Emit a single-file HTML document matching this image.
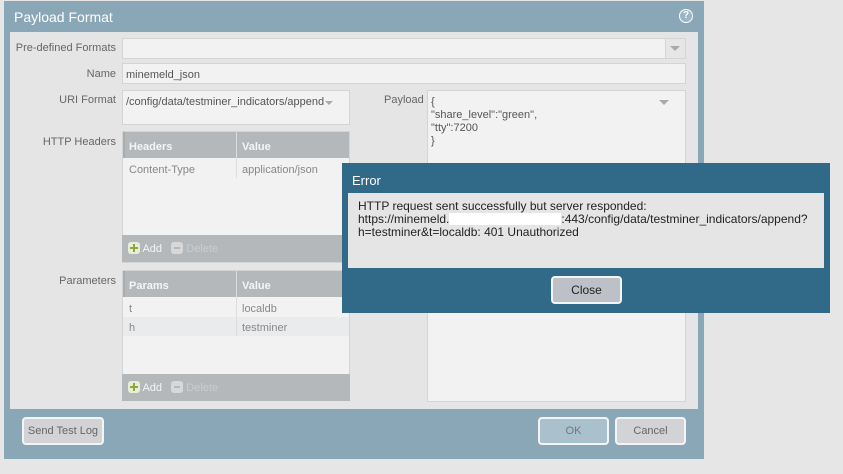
<!DOCTYPE html>
<html><head><style>
*{box-sizing:border-box;margin:0;padding:0}
body{width:843px;height:474px;background:#e6e6e6;font-family:"Liberation Sans",sans-serif;font-size:11px;color:#666;position:relative;overflow:hidden}
.a{position:absolute}
.inp{position:absolute;background:#f2f2f2;border:1px solid #d4d4d4}
.lbl{position:absolute;text-align:right;width:106px;left:10px;color:#666;font-size:11px}
.th{position:absolute;background:#b4b8bb;color:#f5f5f5;font-weight:bold}
.tf{position:absolute;background:#b4b8bb}
.btn{position:absolute;border:2px solid #f4f4f4;border-radius:4px;text-align:center;font-size:11px;color:#666}
.plus{display:inline-block;width:12px;height:12px;border-radius:3px;background:#e8edd8;position:relative;vertical-align:-2px}
.plus:before{content:"";position:absolute;left:2px;top:5px;width:8px;height:2px;background:#8caa3c}
.plus:after{content:"";position:absolute;left:5px;top:2px;width:2px;height:8px;background:#8caa3c}
.minus{display:inline-block;width:12px;height:12px;border-radius:3px;background:#d8d8d8;position:relative;vertical-align:-2px}
.minus:before{content:"";position:absolute;left:3px;top:5px;width:6px;height:2px;background:#b4b8bb}
</style></head><body>
<div class="a" style="left:4px;top:1px;width:700px;height:458px;background:#8aa7b8"></div>
<div class="a" style="left:14px;top:9px;color:#fff;font-size:14px">Payload Format</div>
<div class="a" style="left:679px;top:9px;width:14px;height:14px;border-radius:50%;border:1.5px solid #fff;background:#9ab5c5;color:#fff;font-size:10px;font-weight:bold;text-align:center;line-height:11px">?</div>
<div class="a" style="left:10px;top:32px;width:688px;height:377px;background:#e5e5e5"></div>

<div class="lbl" style="top:42px">Pre-defined Formats</div>
<div class="inp" style="left:122px;top:38px;width:564px;height:21px"></div>
<div class="a" style="left:665px;top:39px;width:20px;height:19px;background:#e6e6e6;border-left:1px solid #d4d4d4"></div>
<div class="a" style="left:670px;top:46px;border-left:5px solid transparent;border-right:5px solid transparent;border-top:5px solid #aaa"></div>

<div class="lbl" style="top:68px">Name</div>
<div class="inp" style="left:122px;top:63px;width:564px;height:21px;padding:5px 3px;color:#555">minemeld_json</div>

<div class="lbl" style="top:94px">URI Format</div>
<div class="inp" style="left:122px;top:90px;width:228px;height:35px;padding:5px 3px;color:#555">/config/data/testminer_indicators/append</div>
<div class="a" style="left:325px;top:101px;border-left:4px solid transparent;border-right:4px solid transparent;border-top:4px solid #aaa"></div>

<div class="a" style="left:384px;top:94px">Payload</div>
<div class="inp" style="left:427px;top:90px;width:259px;height:312px;padding:5px 3px;color:#555;line-height:13px">{<br>"share_level":"green",<br>"tty":7200<br>}</div>
<div class="a" style="left:659px;top:100px;border-left:5px solid transparent;border-right:5px solid transparent;border-top:5px solid #aaa"></div>

<div class="lbl" style="top:136px">HTTP Headers</div>
<div class="inp" style="left:122px;top:131px;width:228px;height:132px"></div>
<div class="th" style="left:123px;top:132px;width:226px;height:26px;border-left:2px solid #a8acaf"></div>
<div class="a" style="left:236px;top:132px;width:1px;height:46px;background:#ddd"></div>
<div class="a" style="left:129px;top:141px;color:#f5f5f5;font-weight:bold">Headers</div>
<div class="a" style="left:242px;top:141px;color:#f5f5f5;font-weight:bold">Value</div>
<div class="a" style="left:129px;top:164px;color:#888">Content-Type</div>
<div class="a" style="left:242px;top:164px;color:#888">application/json</div>
<div class="tf" style="left:122px;top:235px;width:228px;height:27px"></div>
<div class="a" style="left:128px;top:242px;color:#f4f4f4"><span class="plus"></span> Add &nbsp; <span class="minus"></span> <span style="color:#ccc">Delete</span></div>

<div class="lbl" style="top:275px">Parameters</div>
<div class="inp" style="left:122px;top:270px;width:228px;height:131px"></div>
<div class="th" style="left:123px;top:271px;width:226px;height:26px;border-left:2px solid #a8acaf"></div>
<div class="a" style="left:123px;top:317px;width:226px;height:19px;background:#eaebec"></div>
<div class="a" style="left:236px;top:271px;width:1px;height:65px;background:#ddd"></div>
<div class="a" style="left:129px;top:280px;color:#f5f5f5;font-weight:bold">Params</div>
<div class="a" style="left:242px;top:280px;color:#f5f5f5;font-weight:bold">Value</div>
<div class="a" style="left:129px;top:303px;color:#888">t</div>
<div class="a" style="left:242px;top:303px;color:#888">localdb</div>
<div class="a" style="left:129px;top:322px;color:#888">h</div>
<div class="a" style="left:242px;top:322px;color:#888">testminer</div>
<div class="tf" style="left:122px;top:374px;width:228px;height:27px"></div>
<div class="a" style="left:128px;top:381px;color:#f4f4f4"><span class="plus"></span> Add &nbsp; <span class="minus"></span> <span style="color:#ccc">Delete</span></div>

<div class="btn" style="left:22px;top:417px;width:82px;height:28px;background:#d2d3d6;line-height:25px">Send Test Log</div>
<div class="btn" style="left:538px;top:417px;width:71px;height:28px;background:#a9c1cd;line-height:25px;color:#777">OK</div>
<div class="btn" style="left:615px;top:417px;width:71px;height:28px;background:#d2d3d6;line-height:25px">Cancel</div>

<div class="a" style="left:342px;top:163px;width:488px;height:150px;background:#316a88"></div>
<div class="a" style="left:352px;top:173px;color:#fff;font-size:13px">Error</div>
<div class="a" style="left:348px;top:193px;width:476px;height:75px;background:#e5e5e5;padding:7px 10px;color:#222;font-size:12px;line-height:13px">HTTP request sent successfully but server responded:<br>https://minemeld.<span style="display:inline-block;width:112px;height:12px;background:#fff;vertical-align:-2px"></span>:443/config/data/testminer_indicators/append?<br>h=testminer&amp;t=localdb: 401 Unauthorized</div>
<div class="btn" style="left:551px;top:276px;width:71px;height:28px;background:#bdc0c6;line-height:25px;color:#222;font-size:12px">Close</div>
</body></html>
